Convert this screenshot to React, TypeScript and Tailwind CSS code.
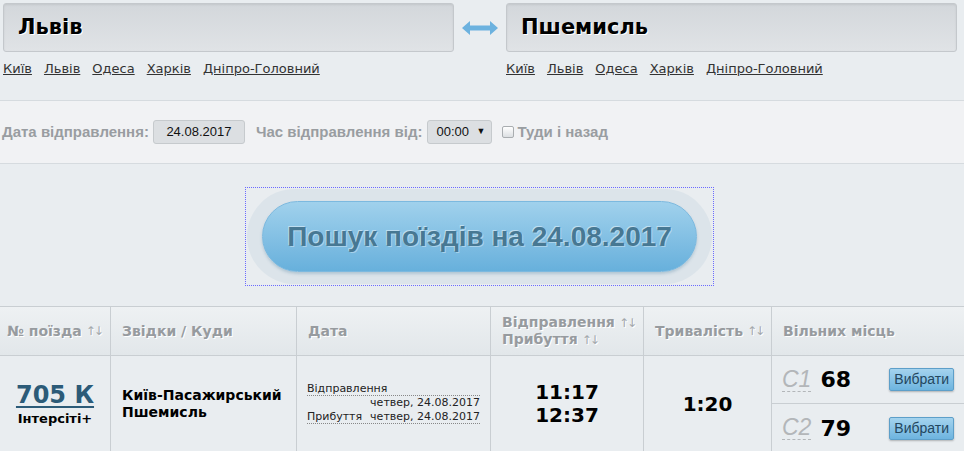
import React from 'react';

const cities = ['Київ', 'Львів', 'Одеса', 'Харків', 'Дніпро-Головний'];

function CityBox({ value }: { value: string }) {
  return (
    <div className="w-[451px]">
      <div className="h-[49px] rounded-[3px] border border-[#c4c8cc] bg-gradient-to-b from-[#d3d7db] to-[#e0e3e6] shadow-[inset_0_1px_2px_rgba(0,0,0,0.08)] flex items-center pl-[14px]">
        <span className="text-[21px] font-bold text-black [text-shadow:1px_1px_0_#fff]">{value}</span>
      </div>
      <div className="flex gap-[12px] mt-[9px] text-[13px] leading-[16px] text-[#333]">
        {cities.map((c) => (
          <a key={c} className="underline cursor-pointer">{c}</a>
        ))}
      </div>
    </div>
  );
}

function Sort() {
  return <span className="text-[12px] text-[#a3a8ac] font-normal ml-[4px] tracking-[-2px]">↑↓</span>;
}

function SeatRow({ cls, count, last }: { cls: string; count: number; last?: boolean }) {
  return (
    <div className={`h-[48px] flex items-center pl-[10px] pr-[10px] ${last ? '' : 'border-b border-[#c9ced2]'}`}>
      <span className="text-[23px] italic text-[#b3b6b9] border-b border-dashed border-[#b3b6b9] leading-[23px] font-['Liberation_Sans',sans-serif]">
        {cls}
      </span>
      <span className="text-[22px] font-bold text-black ml-[9px]">{count}</span>
      <button className="ml-auto h-[23px] px-[4px] rounded-[2px] border border-[#5d9fc9] bg-gradient-to-b from-[#a4d3ee] to-[#6db4df] text-[14px] text-[#23465e] font-['Liberation_Sans',sans-serif] shadow-[0_1px_2px_rgba(0,0,0,0.25)]">
        Вибрати
      </button>
    </div>
  );
}

export default function App() {
  return (
    <div className="w-[964px] h-[451px] overflow-hidden bg-[#e9edf0] font-['DejaVu_Sans',sans-serif] text-[#222]">
      {/* FROM / TO */}
      <div className="h-[100px] flex pt-[3px] pl-[3px]">
        <CityBox value="Львів" />
        <div className="w-[52px] h-[49px] flex items-center justify-center">
          <svg width="36" height="14" viewBox="0 0 36 14">
            <path d="M0 7 L8 0 L8 4.5 L28 4.5 L28 0 L36 7 L28 14 L28 9.5 L8 9.5 L8 14 Z" fill="#6cb2df" />
          </svg>
        </div>
        <CityBox value="Пшемисль" />
      </div>

      {/* DATE ROW */}
      <div className="h-[64px] border-t border-b border-[#d6dbdf] bg-[#f1f2f4] flex items-center pl-[2px] font-['Liberation_Sans',sans-serif] text-[15px] font-bold text-[#999da1]">
        <span>Дата відправлення:</span>
        <div className="ml-[4px] w-[92px] h-[24px] rounded-[3px] border border-[#c6cacd] bg-[#dcdfe2] flex items-center justify-center text-[13px] text-[#111] font-normal">
          24.08.2017
        </div>
        <span className="ml-[11px]">Час відправлення від:</span>
        <div className="ml-[5px] w-[65px] h-[24px] rounded-[3px] border border-[#c6cacd] bg-[#dcdfe2] flex items-center pl-[8px] text-[13px] text-[#111] font-normal">
          00:00
          <span className="ml-auto mr-[6px] text-[9px]">▼</span>
        </div>
        <span className="ml-[10px] w-[12px] h-[12px] rounded-[2px] border border-[#a9adb0] bg-gradient-to-b from-[#fff] to-[#dcdfe2]" />
        <span className="ml-[3px]">Туди і назад</span>
      </div>

      {/* SEARCH BUTTON */}
      <div className="h-[142px] pt-[23px] pl-[245px]">
        <div className="w-[469px] h-[99px] border border-dotted border-[#6b6bff] p-[1px]">
          <div className="h-full rounded-full bg-[#dce4ea] flex items-center justify-center">
            <div className="w-[435px] h-[71px] rounded-full border border-[#7cb9df] bg-gradient-to-b from-[#a0d1ec] to-[#67b0dc] shadow-[0_2px_3px_rgba(80,130,160,0.3)] flex items-center justify-center">
              <span className="font-['Liberation_Sans',sans-serif] font-bold text-[28px] text-[#477893] [text-shadow:-1px_-1px_0_rgba(255,255,255,0.45),1px_1px_0_rgba(255,255,255,0.35)]">
                Пошук поїздів на 24.08.2017
              </span>
            </div>
          </div>
        </div>
      </div>

      {/* TABLE */}
      <div className="border-t border-[#c9ced2]">
        <div className="grid grid-cols-[111px_186px_194px_153px_128px_192px] h-[49px] border-b border-[#c9ced2] bg-gradient-to-b from-[#eef1f3] to-[#e2e7ea] text-[14px] font-bold text-[#979b9f] [text-shadow:1px_1px_0_#fff]">
          <div className="border-r border-[#c9ced2] flex items-center pl-[7px]">
            № поїзда<Sort />
          </div>
          <div className="border-r border-[#c9ced2] flex items-center pl-[11px]">Звідки / Куди</div>
          <div className="border-r border-[#c9ced2] flex items-center pl-[11px]">Дата</div>
          <div className="border-r border-[#c9ced2] flex flex-col justify-center pl-[11px] leading-[16px]">
            <span>
              Відправлення<Sort />
            </span>
            <span>
              Прибуття<Sort />
            </span>
          </div>
          <div className="border-r border-[#c9ced2] flex items-center pl-[11px]">
            Тривалість<Sort />
          </div>
          <div className="flex items-center pl-[11px]">Вільних місць</div>
        </div>

        <div className="grid grid-cols-[111px_186px_194px_153px_128px_192px] h-[97px]">
          <div className="border-r border-[#c9ced2] flex flex-col items-center justify-center pb-[2px]">
            <a className="text-[24px] leading-[26px] font-bold text-[#2c5b78] underline decoration-2 underline-offset-[3px] cursor-pointer">
              705 К
            </a>
            <span className="text-[13px] font-bold text-black mt-[3px] leading-[15px]">Інтерсіті+</span>
          </div>
          <div className="border-r border-[#c9ced2] flex flex-col justify-center pl-[11px] pb-[2px] text-[14px] font-bold text-black leading-[17px]">
            <span>Київ-Пасажирський</span>
            <span>Пшемисль</span>
          </div>
          <div className="border-r border-[#c9ced2] flex items-center pl-[10px] pr-[10px] pb-[2px]">
            <div className="w-full text-[11px] leading-[12px] text-[#222]">
              <div className="border-b border-dotted border-[#888]">Відправлення</div>
              <div className="text-right leading-[14px]">четвер, 24.08.2017</div>
              <div className="flex justify-between border-b border-dotted border-[#888] leading-[13px]">
                <span>Прибуття</span>
                <span>четвер, 24.08.2017</span>
              </div>
            </div>
          </div>
          <div className="border-r border-[#c9ced2] flex flex-col items-center justify-center pb-[2px] text-[20px] font-bold text-black leading-[23px]">
            <span>11:17</span>
            <span>12:37</span>
          </div>
          <div className="border-r border-[#c9ced2] flex items-center justify-center pb-[2px] text-[20px] font-bold text-black">
            1:20
          </div>
          <div className="flex flex-col">
            <SeatRow cls="С1" count={68} />
            <SeatRow cls="С2" count={79} last />
          </div>
        </div>
      </div>
    </div>
  );
}
